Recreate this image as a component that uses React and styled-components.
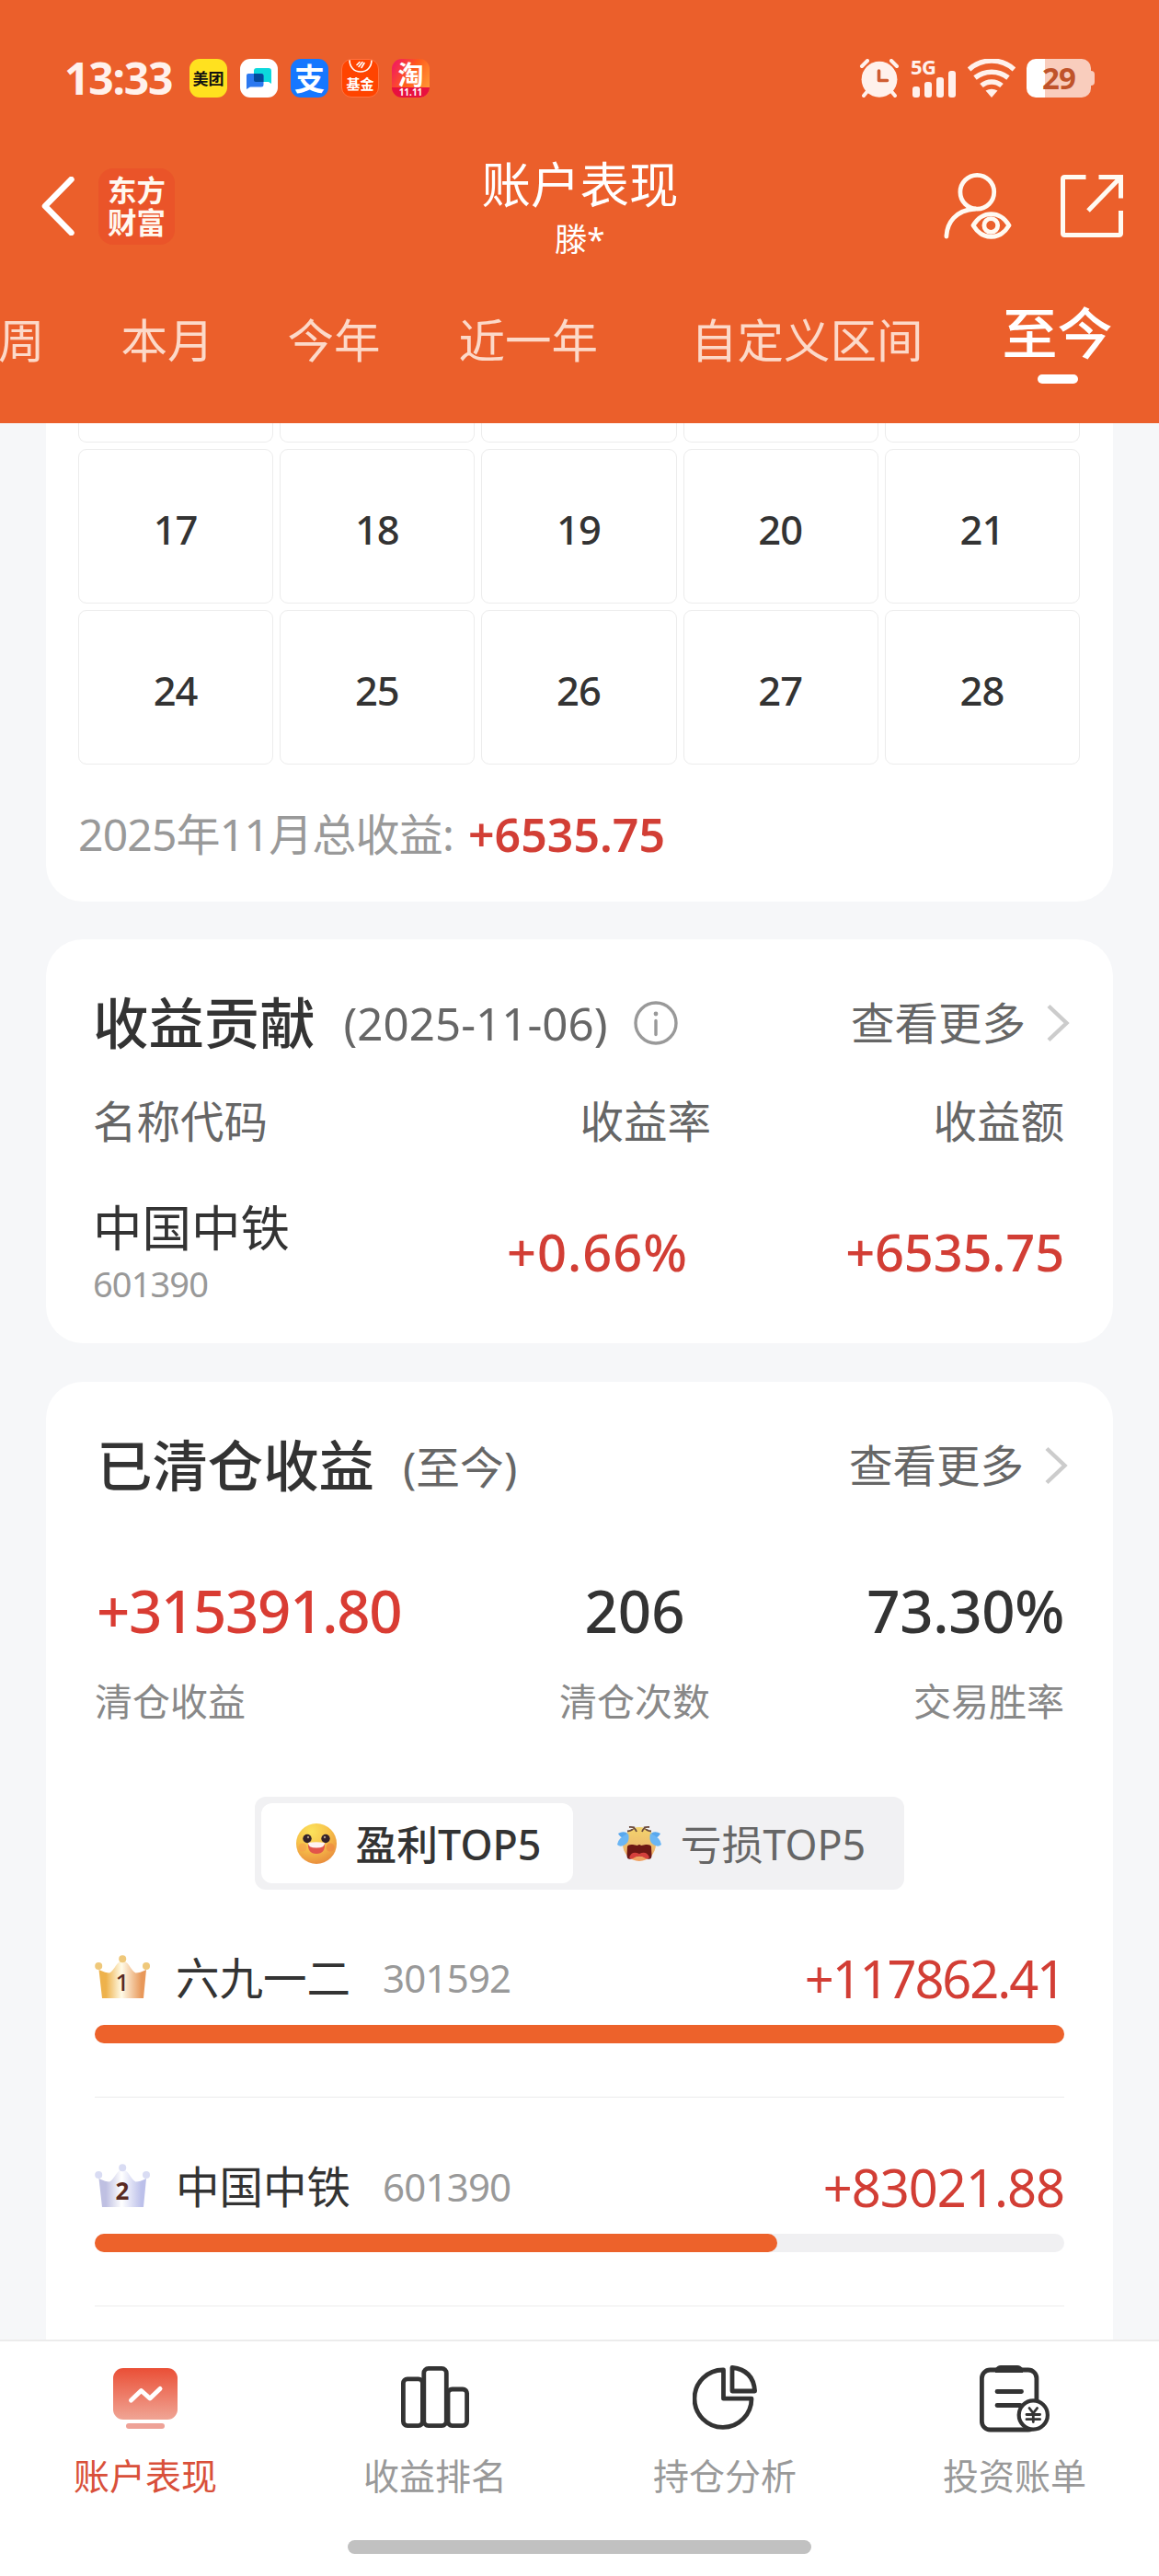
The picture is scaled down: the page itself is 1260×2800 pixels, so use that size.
import React from 'react';
import styled, { createGlobalStyle } from 'styled-components';

const GlobalStyle = createGlobalStyle`
    * {
        box-sizing: border-box;
    }
    body {
        margin: 0;
        background-color: #f6f7f9;
        color: #333;
        font-family: 'Noto Sans', 'Noto Sans CJK SC', sans-serif;
    }
    svg {
        display: block;
        flex-shrink: 0;
    }
`;

const Screen = styled.div`
    width: 1260px;
    height: 2800px;
    display: flex;
    flex-direction: column;
    overflow: hidden;
`;

/* ---------- header ---------- */

const Header = styled.header`
    height: 460px;
    flex-shrink: 0;
    background-color: #eb5f2b;
    color: #fff;
`;

const StatusBar = styled.div`
    height: 170px;
    padding: 0 70px 0 70px;
    display: flex;
    align-items: center;
    justify-content: space-between;
`;

const StatusGroup = styled.div`
    display: flex;
    align-items: center;
    gap: ${props => props.$gap}px;
`;

const Clock = styled.span`
    width: 122px;
    font-size: 48px;
    line-height: 60px;
    font-weight: 700;
    letter-spacing: -1.2px;
    color: #fff1ec;
    white-space: nowrap;
`;

const AppBadge = styled.span`
    width: 41px;
    height: 42px;
    border-radius: 11px;
    display: flex;
    flex-direction: column;
    align-items: center;
    justify-content: ${props => props.$align || 'center'};
    overflow: hidden;
    background: ${props => props.$bg};
    color: ${props => props.$color || '#fff'};
    font-size: ${props => props.$size || 17}px;
    line-height: 1;
    font-weight: 700;
    white-space: nowrap;
`;

const FundBadge = styled(AppBadge)`
    border: 1px solid #ff7340;
    padding-bottom: 6px;
`;

const SaleTag = styled.span`
    width: 100%;
    height: 11px;
    background-color: #e8103f;
    font-size: 10px;
    line-height: 10px;
    text-align: center;
`;

const Signal = styled.div`
    width: 50px;
    height: 42px;
    display: flex;
    flex-direction: column;
    color: #fff1ec;
`;

const SignalLabel = styled.span`
    height: 16px;
    font-size: 22px;
    line-height: 16px;
    font-weight: 700;
    letter-spacing: -0.5px;
`;

const SignalBars = styled.div`
    height: 26px;
    margin: 0 0 0 2px;
    display: flex;
    align-items: flex-end;
    gap: 5px;
`;

const SignalBar = styled.span`
    width: 8px;
    height: ${props => props.$height}px;
    margin-top: -4px;
    border-radius: 3px;
    background-color: #fff1ec;
`;

const Battery = styled.div`
    display: flex;
    align-items: center;
`;

const BatteryBody = styled.div`
    width: 70px;
    height: 42px;
    border-radius: 10px;
    background: linear-gradient(to right, #fff 20px, #f9cdbd 20px);
    color: #c0532a;
    font-size: 33px;
    line-height: 41px;
    font-weight: 700;
    letter-spacing: -1px;
    text-align: center;
`;

const BatteryNub = styled.span`
    width: 4px;
    height: 16px;
    border-radius: 0 4px 4px 0;
    background-color: #f9cdbd;
`;

const TitleBar = styled.div`
    height: 108px;
    padding: 0 38px 0 43px;
    display: grid;
    grid-template-columns: 1fr 220px 1fr;
    align-items: center;
`;

const TitleLeft = styled.div`
    display: flex;
    align-items: center;
    gap: 25px;
`;

const TitleRight = styled.div`
    display: flex;
    align-items: center;
    justify-content: flex-end;
    gap: 52px;
`;

const BrandLogo = styled.div`
    width: 83px;
    height: 83px;
    border-radius: 16px;
    background-color: #ea5429;
    color: #fff8f0;
    display: flex;
    flex-direction: column;
    align-items: center;
    justify-content: center;
    font-size: 31.5px;
    line-height: 35px;
    font-weight: 700;
`;

const TitleCenter = styled.div`
    height: 108px;
    padding: 1px 4px 0 0;
    display: flex;
    flex-direction: column;
    align-items: center;
    gap: 11px;
    white-space: nowrap;
`;

const PageTitle = styled.h1`
    margin: 0;
    font-size: 53.5px;
    line-height: 60px;
    font-weight: 400;
`;

const UserName = styled.span`
    font-size: 35px;
    line-height: 36px;
`;

const Tabs = styled.nav`
    height: 182px;
    margin-left: -2px;
    display: flex;
    align-items: flex-start;
    white-space: nowrap;
`;

const Tab = styled.span`
    margin-left: ${props => props.$gap}px;
    padding-top: 62px;
    font-size: 50.5px;
    line-height: 60px;
    color: #fcd9c9;
`;

const ActiveTab = styled.span`
    margin-left: 86px;
    padding-top: 54px;
    display: flex;
    flex-direction: column;
    align-items: center;
    gap: 15px;
    font-size: 60px;
    line-height: 60px;
    font-weight: 500;

    &::after {
        content: '';
        width: 44px;
        height: 10px;
        border-radius: 5px;
        background-color: #fff;
    }
`;

/* ---------- content ---------- */

const Content = styled.main`
    height: 2083px;
    padding: 0 50px;
    display: flex;
    flex-direction: column;
    overflow: hidden;
`;

const Card = styled.section`
    height: ${props => props.$height}px;
    margin-top: ${props => props.$gap || 41}px;
    flex-shrink: 0;
    padding: 51px 53px 0;
    border-radius: 40px;
    background-color: #fff;
`;

const CalendarCard = styled(Card)`
    margin-top: 0;
    padding: 0 36px 0 35px;
    border-radius: 0 0 40px 40px;
`;

const ContributionCard = styled(Card)`
    padding-left: 51px;
`;

const CalendarGrid = styled.div`
    display: grid;
    grid-template-columns: repeat(5, 1fr);
    grid-template-rows: 21px 168px 168px;
    gap: 7px;
`;

const DayCell = styled.div`
    border: 1px solid #ececec;
    border-radius: 9px;
    display: flex;
    align-items: center;
    justify-content: center;
    padding: 5px 1px 0 0;
    font-size: 43.5px;
    line-height: 60px;
    font-weight: 500;
    letter-spacing: -1px;
`;

const CutCell = styled(DayCell)`
    border-top: 0;
    border-radius: 0 0 9px 9px;
`;

const MonthTotal = styled.div`
    margin-top: 46px;
    display: flex;
    gap: 16px;
    font-size: 48px;
    line-height: 60px;
    letter-spacing: -0.8px;
    color: #999;
    white-space: nowrap;
`;

const MonthValue = styled.span`
    font-size: 50px;
    font-weight: 600;
    letter-spacing: 0;
    color: #d23e35;
`;

const CardHead = styled.div`
    height: 80px;
    margin-right: ${props => props.$outset}px;
    padding-left: ${props => props.$indent || 0}px;
    display: flex;
    align-items: center;
    white-space: nowrap;
`;

const CardTitle = styled.h2`
    margin: 0;
    font-size: 60.4px;
    line-height: 80px;
    font-weight: 500;
`;

const CardNote = styled.span`
    margin-left: 31px;
    margin-right: 28px;
    padding-bottom: 2px;
    font-size: ${props => props.$size}px;
    color: #666;
`;

const MoreLink = styled.span`
    margin-left: auto;
    display: flex;
    align-items: center;
    gap: 22px;
    font-size: 47.5px;
    line-height: 60px;
    color: #666;
`;

const ContributionGrid = styled.div`
    display: grid;
    grid-template-columns: 672px 1fr;
    align-items: center;
    white-space: nowrap;
`;

const ContributionHead = styled(ContributionGrid)`
    margin-top: 37px;
    font-size: 47.5px;
    line-height: 60px;
    color: #666;
`;

const ContributionRow = styled(ContributionGrid)`
    margin-top: 56px;
`;

const SplitCell = styled.div`
    display: flex;
    align-items: center;
    justify-content: space-between;
`;

const RightCell = styled.span`
    text-align: right;
`;

const StockName = styled.div`
    font-size: 53.5px;
    line-height: 60px;
`;

const StockCode = styled.div`
    font-size: 38px;
    line-height: 60px;
    letter-spacing: -0.9px;
    color: #999;
`;

const Gain = styled.span`
    padding: 0 ${props => props.$inset || 0}px 10px 0;
    font-size: 56px;
    line-height: 60px;
    font-weight: 550;
    letter-spacing: ${props => props.$spacing || 0}px;
    color: #d23e35;
    text-align: right;
`;

const Stats = styled.div`
    margin-top: 78px;
    display: grid;
    grid-template-columns: 400px 374px 280px;
    white-space: nowrap;
`;

const Stat = styled.div`
    display: flex;
    flex-direction: column;
    align-items: ${props => props.$align};
    gap: 28px;
`;

const StatValue = styled.span`
    padding-left: ${props => props.$inset || 0}px;
    font-size: 63.5px;
    line-height: 80px;
    font-weight: 550;
    letter-spacing: ${props => props.$spacing || 0}px;
    color: ${props => props.$color || '#333'};
`;

const StatLabel = styled.span`
    font-size: 41px;
    line-height: 60px;
    color: #888;
`;

const Toggle = styled.div`
    width: 706px;
    height: 101px;
    margin: 74px auto 0;
    padding: 7px;
    display: flex;
    border-radius: 12px;
    background-color: #f1f1f3;
`;

const ToggleItem = styled.div`
    flex: ${props => (props.$active ? '0 0 339px' : '1')};
    padding: 2px 0 0 ${props => (props.$active ? 2 : 12)}px;
    display: flex;
    align-items: center;
    justify-content: center;
    gap: 20px;
    border-radius: 12px;
    background-color: ${props => (props.$active ? '#fff' : 'transparent')};
    color: ${props => (props.$active ? '#333' : '#666')};
    font-size: 44.8px;
    line-height: 60px;
    font-weight: ${props => (props.$active ? 500 : 400)};
    white-space: nowrap;

    svg {
        margin-bottom: 2px;
    }
`;

const RankItem = styled.div`
    height: 160px;
    margin-top: ${props => (props.$first ? 66 : 67)}px;
    border-bottom: 1px solid #ececec;
`;

const RankLine = styled.div`
    height: 60px;
    display: flex;
    align-items: center;
    line-height: 60px;
    white-space: nowrap;
`;

const RankName = styled.span`
    margin-left: 28px;
    font-size: 47.5px;
`;

const RankCode = styled.span`
    margin-left: 35px;
    font-size: 42px;
    letter-spacing: -0.8px;
    color: #999;
`;

const RankAmount = styled.span`
    margin-left: auto;
    font-size: 56px;
    letter-spacing: ${props => props.$spacing}px;
    color: #d23e35;
`;

const Track = styled.div`
    height: 20px;
    margin-top: 21px;
    border-radius: 10px;
    background-color: #f0f0f2;
`;

const TrackFill = styled.div`
    height: 20px;
    border-radius: 10px;
    background-color: #ed622b;
`;

/* ---------- bottom bar ---------- */

const BottomBar = styled.footer`
    height: 257px;
    border-top: 2px solid #ececec;
    background-color: #fff;
    display: flex;
    flex-direction: column;
    align-items: center;
`;

const BottomItems = styled.div`
    width: 100%;
    padding-top: 22px;
    display: grid;
    grid-template-columns: repeat(4, 1fr);
`;

const BottomItem = styled.div`
    padding-left: 1px;
    display: flex;
    flex-direction: column;
    align-items: center;
    gap: 20px;
    font-size: 39px;
    line-height: 48px;
    color: ${props => (props.$active ? '#d9503a' : '#999')};
`;

const IconBox = styled.div`
    height: 80px;
    padding-top: ${props => props.$top}px;
`;

const HomeIndicator = styled.div`
    width: 504px;
    height: 15px;
    margin-top: 46px;
    border-radius: 8px;
    background-color: #c1c1c1;
`;

/* ---------- icons ---------- */

const ChatIcon = () => (
    <svg width="41" height="42" viewBox="0 0 41 42">
        <path d="M18 10h13a3 3 0 0 1 3 3v14l-3-2H18a3 3 0 0 1-3-3v-9a3 3 0 0 1 3-3z" fill="#0cd8dc" />
        <path d="M9 16h14a2.500 2.500 0 0 1 2.500 2.500V28a2.500 2.500 0 0 1-2.500 2.500H11L7 33V18a2 2 0 0 1 2-2z" fill="#2b78f0" />
        <path d="M15 16h8a2.500 2.500 0 0 1 2.500 2.500V25H17a2 2 0 0 1-2-2z" fill="#024a9b" />
    </svg>
);

const FundMark = () => (
    <svg width="26" height="14" viewBox="0 0 26 14">
        <path d="M1 0C1 8 6 13 13 13S25 8 25 0" fill="none" stroke="#fff" strokeWidth="1.600" />
        <path d="M9 5.500l3-3M11 7.500l4-5M14 8.500l3-5" stroke="#fff" strokeWidth="1.600" strokeLinecap="round" />
    </svg>
);

const AlarmIcon = () => (
    <svg width="44" height="42" viewBox="0 0 44 42" fill="none" stroke="#fff1ec" strokeLinecap="round">
        <path d="M3 8l6-6M35 2l6 6M10 34l-5 6M34 34l5 6" strokeWidth="4" />
        <ellipse cx="22" cy="22.300" rx="19.400" ry="19.500" fill="#fff1ec" stroke="none" />
        <path d="M21.500 13v10.500h9" stroke="#cf5c32" strokeWidth="3.600" strokeLinejoin="round" />
    </svg>
);

const WifiIcon = () => (
    <svg width="52" height="42" viewBox="0 0 52 42" fill="none" stroke="#fff1ec" strokeWidth="5.500">
        <path d="M1.500 11.500A36.500 36.500 0 0 1 50.500 11.500" />
        <path d="M8 20.500A29 29 0 0 1 44 20.500" />
        <path d="M15 29A17 17 0 0 1 37 29" />
        <path d="M19.500 34.500Q26 31 32.500 34.500L26 42z" fill="#fff1ec" stroke="none" />
    </svg>
);

const BackIcon = () => (
    <svg width="39" height="64" viewBox="0 0 39 64" fill="none" stroke="#fff" strokeWidth="6.500">
        <path d="M34.500 3L6 32l28.500 29" strokeLinecap="round" strokeLinejoin="round" />
    </svg>
);

const UserEyeIcon = () => (
    <svg width="74" height="74" viewBox="0 0 74 74" fill="none" stroke="#fffaf2" strokeWidth="4.800" strokeLinecap="round">
        <circle cx="36.300" cy="21.700" r="18.400" />
        <path d="M2.900 70C3.500 55 13 41.500 34 40" />
        <path d="M32 58C42 41.500 61 41.500 71 58C61 74.500 42 74.500 32 58z" strokeLinejoin="round" />
        <circle cx="51.300" cy="58" r="7.400" />
    </svg>
);

const ShareIcon = () => (
    <svg width="70" height="70" viewBox="0 0 70 70" fill="none" stroke="#fffaf2" strokeWidth="5">
        <path d="M28.500 3.500H5.500Q3.500 3.500 3.500 5.500V64.500Q3.500 66.500 5.500 66.500H64.500Q66.500 66.500 66.500 64.500V40" />
        <path d="M42.500 3.500H66.500V26.500M66 4L31 40" />
    </svg>
);

const InfoIcon = () => (
    <svg width="48" height="48" viewBox="0 0 48 48" fill="none" stroke="#999" strokeWidth="3.400">
        <circle cx="24" cy="24" r="22" />
        <path d="M24 21.500v15" strokeLinecap="round" />
        <circle cx="24" cy="14" r="2.400" fill="#999" stroke="none" />
    </svg>
);

const ArrowIcon = () => (
    <svg width="26" height="42" viewBox="0 0 26 42" fill="none" stroke="#ccc" strokeWidth="4.400">
        <path d="M3 2.500L22.500 21L3 39.500" />
    </svg>
);

const SmileIcon = () => (
    <svg width="46" height="46" viewBox="0 0 46 46">
        <defs>
            <radialGradient id="smile" cx="0.380" cy="0.200" r="0.850">
                <stop offset="0" stopColor="#fce25c" />
                <stop offset="0.500" stopColor="#f7c24a" />
                <stop offset="1" stopColor="#e88a3c" />
            </radialGradient>
        </defs>
        <circle cx="23" cy="23" r="22" fill="url(#smile)" />
        <circle cx="8" cy="27" r="4.500" fill="#f6a04c" opacity="0.600" />
        <circle cx="38" cy="27" r="4.500" fill="#ee8442" opacity="0.600" />
        <circle cx="13" cy="17.500" r="4.700" fill="#33222a" />
        <circle cx="33" cy="17.500" r="4.700" fill="#33222a" />
        <circle cx="14" cy="16" r="1.200" fill="#a98" />
        <circle cx="32" cy="16" r="1.200" fill="#a98" />
        <path d="M14 22Q23 24 32 22Q33 34 23 34Q13 34 14 22z" fill="#e2544a" />
        <path d="M14 22Q23 20.500 32 22Q32.500 27.500 23 27.500Q13.500 27.500 14 22z" fill="#fff3f0" />
    </svg>
);

const CryIcon = () => (
    <svg width="50" height="40" viewBox="0 0 50 40">
        <defs>
            <linearGradient id="cry" x1="0" y1="0" x2="0" y2="1">
                <stop offset="0" stopColor="#f3d46c" />
                <stop offset="0.600" stopColor="#eebb6e" />
                <stop offset="1" stopColor="#ef9f60" />
            </linearGradient>
        </defs>
        <ellipse cx="25" cy="20.500" rx="18" ry="18.500" fill="url(#cry)" />
        <path d="M12 6.500Q18 6 19.500 1.500M38 6.500Q32 6 30.500 1.500M14 2q6-1 8 5M36 2q-6-1-8 5" fill="none" stroke="#6a4a3e" strokeWidth="1.800" />
        <path d="M12 23Q13 20.500 18 21L23 22Q25 20 27 22L32 21Q37 20.500 38 23L38.500 33Q38 38 34 36.500Q25 30 16 36.500Q12 38 11.500 33z" fill="#6d1714" />
        <path d="M14 35Q17 27 25 31Q33 27 36 35Q34 37.500 31 35.500Q25 31.500 19 35.500Q16 37.500 14 35z" fill="#d5403c" />
        <path d="M2 9Q7 6 12 8.500Q11 12 8 14Q4 13 2 9z" fill="#58a8ee" />
        <path d="M13 9Q15 16 11 20Q5 25 1 21Q2 13 13 9z" fill="#6bb6f4" />
        <path d="M48 9Q43 6 38 8.500Q39 12 42 14Q46 13 48 9z" fill="#58a8ee" />
        <path d="M37 9Q35 16 39 20Q45 25 49 21Q48 13 37 9z" fill="#6bb6f4" />
    </svg>
);

const crownColors = {
    1: { edge: '#eeb24c', mid: '#fffbe8', end: '#e8985a', ball: '#efc87a' },
    2: { edge: '#bfc0e2', mid: '#ffffff', end: '#bcc0ea', ball: '#d9dcf3' },
};

const CrownIcon = ({ rank }) => {
    const c = crownColors[rank];
    return (
        <svg width="60" height="50" viewBox="0 0 60 50">
            <defs>
                <linearGradient id={`crown${rank}`} x1="0" y1="0" x2="1" y2="0">
                    <stop offset="0.150" stopColor={c.edge} />
                    <stop offset="0.480" stopColor={c.mid} />
                    <stop offset="0.900" stopColor={c.end} />
                </linearGradient>
            </defs>
            <path d="M4.500 16Q12 19.500 16 19.500Q19 18 23 11.500Q27 6 30 6Q33.500 6 37.500 11.500Q41.500 18 44.500 19.500Q49 19.500 56 16L53 47H8z" fill={`url(#crown${rank})`} />
            <circle cx="4.200" cy="12" r="4" fill={c.ball} />
            <circle cx="30.200" cy="4.200" r="4" fill={c.ball} />
            <circle cx="56" cy="12" r="4" fill={c.ball} />
            <text x="30" y="39" textAnchor="middle" fontSize="26" fontWeight={rank === 1 ? 500 : 700} fill="#5a2a22">{rank}</text>
        </svg>
    );
};

const AccountIcon = () => (
    <svg width="70" height="67" viewBox="0 0 70 67">
        <defs>
            <linearGradient id="account" x1="0" y1="0" x2="0" y2="1">
                <stop offset="0" stopColor="#ea4f36" />
                <stop offset="1" stopColor="#f0a595" />
            </linearGradient>
        </defs>
        <rect width="70" height="56" rx="11" fill="url(#account)" />
        <path d="M19.500 35L30.500 24.500L40 33L51 22.500" fill="none" stroke="#fff" strokeWidth="5" strokeLinecap="round" strokeLinejoin="round" />
        <rect x="14" y="60" width="42" height="6" rx="3" fill="#eea297" />
    </svg>
);

const RankingIcon = () => (
    <svg width="74" height="67" viewBox="0 0 74 67" fill="none" stroke="#333" strokeWidth="4.800">
        <rect x="2.400" y="13.800" width="21" height="50.800" rx="4.500" />
        <rect x="24.800" y="2.400" width="24.500" height="62.200" rx="5" />
        <rect x="51" y="25" width="20.600" height="39.600" rx="4.500" />
    </svg>
);

const PieIcon = () => (
    <svg width="70" height="70" viewBox="0 0 70 70" fill="none" stroke="#333" strokeWidth="4.800" strokeLinejoin="round">
        <path d="M33.500 5A31 31.200 0 1 0 64 36.200H33.500z" />
        <path d="M43 2.500V28H67.600Q66 5 43 2.500z" />
    </svg>
);

const BillIcon = () => (
    <svg width="76" height="73" viewBox="0 0 76 73" fill="none" stroke="#333" strokeWidth="4.800" strokeLinecap="round">
        <path d="M17 4Q19 0 23 0H41Q45 0 47 4V8H17z" fill="#333" stroke="none" />
        <rect x="2.400" y="5" width="59.500" height="65" rx="9" />
        <path d="M19 28.500H45.500M19 43.500H44" />
        <circle cx="58.300" cy="54" r="15.600" fill="#fff" strokeWidth="4.200" />
        <path d="M54 46.500L58.300 52L62.600 46.500M58.300 52V61.500M51 53.500H65.600M51 58.700H65.600" strokeWidth="2.800" />
    </svg>
);

/* ---------- data ---------- */

const tabs = [
    { name: '周', gap: 0 },
    { name: '本月', gap: 83 },
    { name: '今年', gap: 80 },
    { name: '近一年', gap: 85 },
    { name: '自定义区间', gap: 101 },
];

const days = [17, 18, 19, 20, 21, 24, 25, 26, 27, 28];

const topFive = [
    { rank: 1, name: '六九一二', code: '301592', amount: 117862.41, spacing: -2.1 },
    { rank: 2, name: '中国中铁', code: '601390', amount: 83021.88, spacing: -1 },
];

const bottomItems = [
    { name: '账户表现', icon: <AccountIcon />, top: 7, active: true },
    { name: '收益排名', icon: <RankingIcon />, top: 5 },
    { name: '持仓分析', icon: <PieIcon />, top: 4 },
    { name: '投资账单', icon: <BillIcon />, top: 4 },
];

const PageHeader = () => (
    <Header>
        <StatusBar>
            <StatusGroup $gap={14}>
                <Clock>13:33</Clock>
                <AppBadge $bg="#ffe11f" $color="#111">美团</AppBadge>
                <AppBadge $bg="#fff"><ChatIcon /></AppBadge>
                <AppBadge $bg="#1677ff" $size={33}>支</AppBadge>
                <FundBadge $bg="#ff4400" $size={15} $align="space-between">
                    <FundMark />
                    基金
                </FundBadge>
                <AppBadge $bg="linear-gradient(120deg, #f0106a, #ff5a1c 45%, #ffa53a)" $size={28} $align="flex-end">
                    淘
                    <SaleTag>11.11</SaleTag>
                </AppBadge>
            </StatusGroup>
            <StatusGroup $gap={12}>
                <AlarmIcon />
                <Signal>
                    <SignalLabel>5G</SignalLabel>
                    <SignalBars>
                        <SignalBar $height={12} />
                        <SignalBar $height={17} />
                        <SignalBar $height={22} />
                        <SignalBar $height={29} />
                    </SignalBars>
                </Signal>
                <WifiIcon />
                <Battery>
                    <BatteryBody>29</BatteryBody>
                    <BatteryNub />
                </Battery>
            </StatusGroup>
        </StatusBar>
        <TitleBar>
            <TitleLeft>
                <BackIcon />
                <BrandLogo>
                    <span>东方</span>
                    <span>财富</span>
                </BrandLogo>
            </TitleLeft>
            <TitleCenter>
                <PageTitle>账户表现</PageTitle>
                <UserName>滕*</UserName>
            </TitleCenter>
            <TitleRight>
                <UserEyeIcon />
                <ShareIcon />
            </TitleRight>
        </TitleBar>
        <Tabs>
            {tabs.map(tab => <Tab key={tab.name} $gap={tab.gap}>{tab.name}</Tab>)}
            <ActiveTab>至今</ActiveTab>
        </Tabs>
    </Header>
);

const Calendar = () => (
    <CalendarCard $height={520}>
        <CalendarGrid>
            {[0, 1, 2, 3, 4].map(i => <CutCell key={i} />)}
            {days.map(day => <DayCell key={day}>{day}</DayCell>)}
        </CalendarGrid>
        <MonthTotal>
            2025年11月总收益:
            <MonthValue>+6535.75</MonthValue>
        </MonthTotal>
    </CalendarCard>
);

const Contribution = () => (
    <ContributionCard $height={439}>
        <CardHead $outset={-6}>
            <CardTitle>收益贡献</CardTitle>
            <CardNote $size={49.3}>(2025-11-06)</CardNote>
            <InfoIcon />
            <MoreLink>查看更多<ArrowIcon /></MoreLink>
        </CardHead>
        <ContributionHead>
            <SplitCell>
                <span>名称代码</span>
                <span>收益率</span>
            </SplitCell>
            <RightCell>收益额</RightCell>
        </ContributionHead>
        <ContributionRow>
            <SplitCell>
                <div>
                    <StockName>中国中铁</StockName>
                    <StockCode>601390</StockCode>
                </div>
                <Gain $inset={25} $spacing={1}>+0.66%</Gain>
            </SplitCell>
            <Gain $spacing={-0.2}>+6535.75</Gain>
        </ContributionRow>
    </ContributionCard>
);

const Cleared = () => (
    <Card $height={1200} $gap={42}>
        <CardHead $indent={2} $outset={-4}>
            <CardTitle>已清仓收益</CardTitle>
            <CardNote $size={47.8}>(至今)</CardNote>
            <MoreLink>查看更多<ArrowIcon /></MoreLink>
        </CardHead>
        <Stats>
            <Stat $align="flex-start">
                <StatValue $color="#d93c33" $spacing={-1.3} $inset={2}>+315391.80</StatValue>
                <StatLabel>清仓收益</StatLabel>
            </Stat>
            <Stat $align="center">
                <StatValue>206</StatValue>
                <StatLabel>清仓次数</StatLabel>
            </Stat>
            <Stat $align="flex-end">
                <StatValue $spacing={-0.3}>73.30%</StatValue>
                <StatLabel>交易胜率</StatLabel>
            </Stat>
        </Stats>
        <Toggle>
            <ToggleItem $active><SmileIcon />盈利TOP5</ToggleItem>
            <ToggleItem><CryIcon />亏损TOP5</ToggleItem>
        </Toggle>
        {topFive.map(item => (
            <RankItem key={item.rank} $first={item.rank === 1}>
                <RankLine>
                    <CrownIcon rank={item.rank} />
                    <RankName>{item.name}</RankName>
                    <RankCode>{item.code}</RankCode>
                    <RankAmount $spacing={item.spacing}>+{item.amount.toFixed(2)}</RankAmount>
                </RankLine>
                <Track>
                    <TrackFill style={{ width: `${item.amount / topFive[0].amount * 100}%` }} />
                </Track>
            </RankItem>
        ))}
    </Card>
);

const App = () => {
    return (
        <Screen>
            <GlobalStyle />
            <PageHeader />
            <Content>
                <Calendar />
                <Contribution />
                <Cleared />
            </Content>
            <BottomBar>
                <BottomItems>
                    {bottomItems.map(item => (
                        <BottomItem key={item.name} $active={item.active}>
                            <IconBox $top={item.top}>{item.icon}</IconBox>
                            {item.name}
                        </BottomItem>
                    ))}
                </BottomItems>
                <HomeIndicator />
            </BottomBar>
        </Screen>
    );
};

export default App;
